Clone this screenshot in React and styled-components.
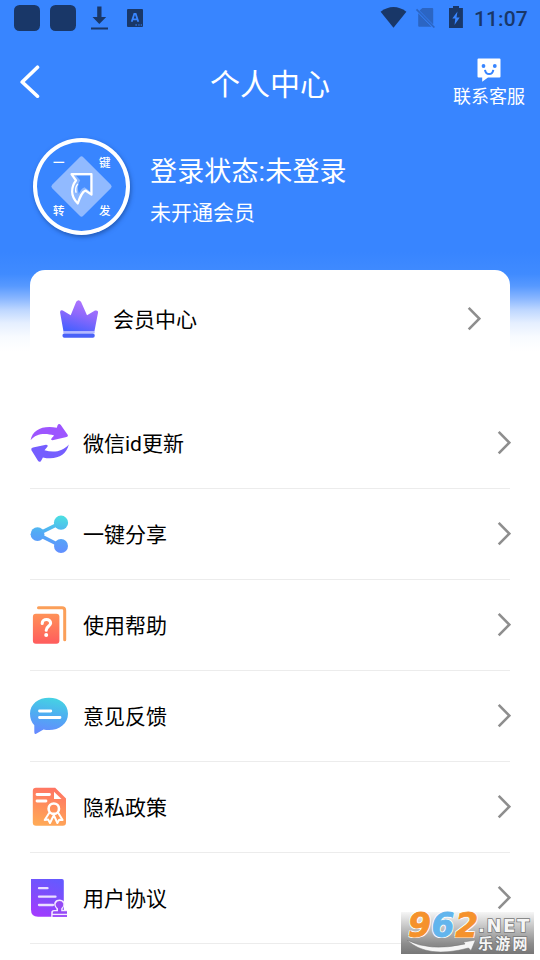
import React from "react";
import styled, { createGlobalStyle } from "styled-components";

const CrownIcon = () => (
  <svg width="40" height="40" viewBox="0 0 40 40">
    <defs>
      <linearGradient id="crown" x1="0.7" y1="0" x2="0.35" y2="1">
        <stop offset="0" stopColor="#b276ff" />
        <stop offset="0.45" stopColor="#9069fb" />
        <stop offset="1" stopColor="#4860ff" />
      </linearGradient>
    </defs>
    <g transform="translate(0 1)">
      <path
        d="M4.5 31.5 1.1 12.5Q1 9.5 3.8 10.6L11.7 15.2 17.2 1.8Q19.5-1.4 22 1.8L28 15.2 36 10.6Q39.5 9.7 39 12.8L35.4 31.5Z"
        fill="url(#crown)"
      />
      <path d="M4.3 31.5H35.7V33.4H4.3Z" fill="#b5b8ff" />
      <rect x="3.5" y="33.4" width="32.2" height="4.4" rx="1.8" fill="#4961f8" />
    </g>
  </svg>
);

const RefreshIcon = () => (
  <svg width="40" height="40" viewBox="0 0 40 40">
    <path
      d="M.6 17.3C2.5 7 12.5 2.2 26.8 4.8L27.6 2.2Q29 0 31 2.3L37.8 12Q38.5 13.7 36.5 14.1L22.5 17.2Q20.2 17 21.8 14.9L24.2 12.6C14.5 9.7 6 10.8 .6 17.3Z"
      fill="#9d55ff"
    />
    <path
      d="M38.8 21.5C36.5 32.4 26 37.4 12.9 34.4L11 37.9Q9.5 39.9 7.8 37.6L1.3 26.9Q.9 25 3 24.5L16 21.7Q18.7 21.8 17.2 24.1L14.5 27.2C24 30.3 33 28.3 38.8 21.5Z"
      fill="#755eff"
    />
  </svg>
);

const ShareIcon = () => (
  <svg width="40" height="40" viewBox="0 0 40 40">
    <defs>
      <linearGradient id="share" gradientUnits="userSpaceOnUse" x1="24" y1="2" x2="20" y2="38">
        <stop offset="0" stopColor="#4cdde2" />
        <stop offset="0.5" stopColor="#52aaf5" />
        <stop offset="1" stopColor="#628eff" />
      </linearGradient>
    </defs>
    <g fill="url(#share)">
      <circle cx="7.5" cy="20.2" r="6.9" />
      <circle cx="31" cy="8.7" r="7.1" />
      <circle cx="31" cy="32" r="7" />
    </g>
    <path d="M31 8.7 7.5 20.2 31 32" fill="none" stroke="url(#share)" strokeWidth="3.6" />
  </svg>
);

const HelpIcon = () => (
  <svg width="40" height="40" viewBox="0 0 40 40">
    <defs>
      <linearGradient id="help" x1="0" y1="0" x2="0" y2="1">
        <stop offset="0" stopColor="#ff9258" />
        <stop offset="1" stopColor="#ff5c5d" />
      </linearGradient>
    </defs>
    <path d="M8.5 2.7H32Q34.7 2.7 34.7 5.4V34.8" fill="none" stroke="#fb9f59" strokeWidth="3" strokeLinecap="round" />
    <rect x="2.9" y="8.7" width="26.5" height="30" rx="3" fill="url(#help)" />
    <path
      d="M12.2 18.5C12.3 13 20.8 13.4 20.6 18.2C20.5 21.3 16.2 21.4 16.2 25.2"
      fill="none"
      stroke="#fff"
      strokeWidth="3.1"
      strokeLinecap="round"
    />
    <circle cx="16.2" cy="30" r="2" fill="#fff" />
  </svg>
);

const FeedbackIcon = () => (
  <svg width="40" height="40" viewBox="0 0 40 40">
    <defs>
      <linearGradient id="feedback" x1="0.6" y1="0" x2="0.4" y2="1">
        <stop offset="0" stopColor="#45d3e3" />
        <stop offset="0.5" stopColor="#4fabf2" />
        <stop offset="1" stopColor="#668aff" />
      </linearGradient>
    </defs>
    <g transform="translate(0 -1)">
      <path
        d="M19 2.8C29.5 2.8 38 9 38 18.7C38 28.5 29.5 35 19 35Q16 35 13.5 34.4L6.2 38.7Q4.2 39.5 4.3 37V30.2Q0 26 0 18.8C0 9 8.5 2.8 19 2.8Z"
        fill="url(#feedback)"
      />
      <path d="M9.5 16H20.8M9.5 22.5H30" stroke="#fff" strokeWidth="2.8" strokeLinecap="round" />
    </g>
  </svg>
);

const PrivacyIcon = () => (
  <svg width="40" height="40" viewBox="0 0 40 40">
    <defs>
      <linearGradient id="privacy" x1="0.6" y1="0" x2="0.4" y2="1">
        <stop offset="0" stopColor="#ff7463" />
        <stop offset="1" stopColor="#ffa957" />
      </linearGradient>
    </defs>
    <path d="M6 .8H25.2L36 11.6V35.6Q36 38.8 32.8 38.8H6Q2.8 38.8 2.8 35.6V4Q2.8.8 6 .8Z" fill="url(#privacy)" />
    <path d="M24 4.7V12H31.5Z" fill="#fff" />
    <g fill="none" stroke="#fff" strokeLinecap="round" strokeLinejoin="round">
      <path d="M7 7.5H19.5M7 14H16" strokeWidth="2.8" />
      <circle cx="23.8" cy="21.7" r="5.2" strokeWidth="2.6" />
      <path
        d="M19.5 25.5 14.7 33 18.2 32.6 20 36 23.8 28.2 27.4 36 29.2 32.7 32.6 33 28 25.5"
        strokeWidth="2"
      />
    </g>
  </svg>
);

const AgreementIcon = () => (
  <svg width="40" height="40" viewBox="0 0 40 40">
    <defs>
      <linearGradient id="agreement" x1="0.65" y1="0" x2="0.3" y2="1">
        <stop offset="0" stopColor="#6659ff" />
        <stop offset="0.5" stopColor="#814cfb" />
        <stop offset="1" stopColor="#a23bff" />
      </linearGradient>
    </defs>
    <path d="M1 .9H32Q33.8.9 33.8 2.7V38.8H8Q1 38.8 1 31.8Z" fill="url(#agreement)" />
    <path d="M9 10.2H17.5M9 18.7H25.5M9 27H23" stroke="#eadfff" strokeWidth="2.3" strokeLinecap="round" />
    <path
      d="M21.2 39V34.5Q21.2 32 24 32H26.6Q26.5 30.3 25.3 29.2C22.6 24.6 25.4 21.4 29.5 21.4C33.8 21.4 36.2 25 33.5 29.2Q32.5 30.3 32.6 32H37V39Z"
      fill="#f4eaff"
    />
    <path
      d="M22.8 35.8V34.6Q22.8 33.2 24.4 33.2H28V30.5Q25 28 25.8 25.4Q27 23 29.6 23Q32.2 23 33.3 25.4Q34 28 31.2 30.5V33.2H37V35.8Z"
      fill="#9449f5"
    />
    <path d="M22.6 37H37V39H22.6Z" fill="#a052fa" />
  </svg>
);

const Chevron = () => (
  <svg width="14" height="24" viewBox="0 0 14 24">
    <path d="M1.7.9 12.3 11.6 1.7 22.3" fill="none" stroke="#8e8e8e" strokeWidth="2.6" />
  </svg>
);

const menu = [
  { label: "微信id更新", icon: <RefreshIcon /> },
  { label: "一键分享", icon: <ShareIcon /> },
  { label: "使用帮助", icon: <HelpIcon /> },
  { label: "意见反馈", icon: <FeedbackIcon /> },
  { label: "隐私政策", icon: <PrivacyIcon /> },
  { label: "用户协议", icon: <AgreementIcon /> },
];

const StatusIcons = () => (
  <svg width="146" height="36" viewBox="0 0 146 36">
    <g fill="#193768">
      <rect x="14" y="5" width="26" height="26" rx="5.5" />
      <rect x="50" y="5" width="26" height="26" rx="5.5" />
      <path d="M97.2 6.5H101.5V17H106.2L99.3 24 92.5 17H97.2ZM91 27.4H108V29.6H91Z" />
      <rect x="127" y="9" width="16" height="18" rx="1" />
    </g>
    <path d="M131.7 21.8 134.3 14H135.7L138.3 21.8M132.7 19.3H137.3" fill="none" stroke="#3885ff" strokeWidth="1.8" />
    <path d="M135.3 25H137M138.3 25H139.6M140.7 25H142" stroke="#3885ff" strokeWidth="1.2" />
  </svg>
);

const SignalIcons = () => (
  <svg width="84" height="36" viewBox="380 0 84 36">
    <path d="M380.6 11.7Q393.5 2.5 406.4 11.7L393.5 27.8Z" fill="#193768" />
    <path d="M422.5 8H432.2Q433.2 8 433.2 9V24.5L419.5 10.6ZM418.2 13.2 431.5 26.8H419.2Q418.2 26.8 418.2 25.8Z" fill="#2b65c3" />
    <path d="M416.5 9.3 434.4 27.5" stroke="#2b65c3" strokeWidth="1.7" />
    <path d="M453 6H459V8H462.9V28H449V8H453Z" fill="#193768" />
    <path d="M457.5 11.5 452.3 18.5H455.3L454.5 25 459.7 17.6H456.5Z" fill="#3885ff" />
  </svg>
);

const AvatarArt = () => (
  <svg width="97" height="97" viewBox="0 0 97 97">
    <rect x="26.5" y="26.5" width="44" height="44" rx="2.5" fill="#91baff" transform="rotate(45 48.5 48.5)" />
    <path
      d="M38.5 36.2H58.5V56.7L52.5 52.5C48.8 54 47 59 44.8 65.5C37 58 38 49 43 42.5Z"
      fill="#8db8ff"
      stroke="#fff"
      strokeWidth="2.2"
      strokeLinejoin="round"
    />
    <path d="M43 37.8H57V53.2L51.5 49.2Q47.7 51 45.8 56Q43.5 48 47.2 42.2Z" fill="#4a90ff" />
    <path d="M44.8 45.8Q41.5 50 43.2 54.8" fill="none" stroke="#fff" strokeWidth="1.3" />
  </svg>
);

const ServiceIcon = () => (
  <svg width="24" height="25" viewBox="0 0 24 25">
    <path d="M1.5.5H22.5Q23.5.5 23.5 1.5V18.5Q23.5 19.5 22.5 19.5H11L5.2 23.8V19.5H1.5Q.5 19.5.5 18.5V1.5Q.5.5 1.5.5Z" fill="#fff" />
    <g fill="#3885ff">
      <circle cx="6.5" cy="8" r="1.9" />
      <circle cx="17.8" cy="8" r="1.9" />
    </g>
    <path d="M8 11.8C8.8 17.4 15.5 17.4 16.3 11.8" fill="none" stroke="#3885ff" strokeWidth="2" />
  </svg>
);

const App = () => {
  return (
    <Page>
      <GlobalStyle />
      <Hero>
        <StatusBar>
          <StatusIcons />
          <StatusRight>
            <SignalIcons />
            <Clock>11:07</Clock>
          </StatusRight>
        </StatusBar>
        <TitleBar>
          <BackButton aria-label="返回">
            <svg width="22" height="34" viewBox="0 0 22 34">
              <path d="M18.5 2.2 3.2 17 18.5 31.2" fill="none" stroke="#fff" strokeWidth="3.6" strokeLinecap="round" strokeLinejoin="round" />
            </svg>
          </BackButton>
          <Title>个人中心</Title>
          <Service>
            <ServiceIcon />
            <span>联系客服</span>
          </Service>
        </TitleBar>
        <Profile>
          <Avatar>
            <AvatarArt />
            <AvatarText>
              <span>一</span>
              <span>键</span>
              <span>转</span>
              <span>发</span>
            </AvatarText>
          </Avatar>
          <div>
            <LoginState>登录状态:未登录</LoginState>
            <MemberState>未开通会员</MemberState>
          </div>
        </Profile>
        <MemberCard>
          <CrownIcon />
          <Label>会员中心</Label>
          <Chevron />
        </MemberCard>
      </Hero>
      <Menu>
        {menu.map((item) => (
          <MenuItem key={item.label}>
            {item.icon}
            <Label>{item.label}</Label>
            <Chevron />
          </MenuItem>
        ))}
      </Menu>
      <Watermark>
        <Swoosh viewBox="0 0 70 14">
          <path d="M0 0Q22 12 58 4L56.5 2 68.5 0 64 10.5 61.5 8Q20 19 0 0Z" fill="#f5f5f5" stroke="#777" strokeWidth=".5" />
        </Swoosh>
        <Digits>
          9<Digit $color="#62b5ed">6</Digit>2
        </Digits>
        <Net>.NET</Net>
        <SiteName>乐游网</SiteName>
      </Watermark>
    </Page>
  );
};

export default App;

// Styled Components
const GlobalStyle = createGlobalStyle`
  * {
    box-sizing: border-box;
  }

  body {
    margin: 0;
    background: #fff;
    font-family: Roboto, "Noto Sans CJK SC", sans-serif;
  }

  svg {
    display: block;
    flex-shrink: 0;
  }
`;

const Page = styled.div`
  position: relative;
  width: 540px;
  height: 960px;
  overflow: hidden;
  background: #fff;
`;

const Hero = styled.header`
  height: 398px;
  background: linear-gradient(
    #3885ff 0,
    #3885ff 252px,
    #408bff 274px,
    #5799ff 286px,
    #87b5ff 298px,
    #bed7ff 310px,
    #e5efff 323px,
    #f8fbff 337px,
    #fff 352px
  );
`;

const StatusBar = styled.div`
  display: flex;
  justify-content: space-between;
  height: 36px;
`;

const StatusRight = styled.div`
  display: flex;
  align-items: center;
  gap: 10px;
  width: 160px;
`;

const Clock = styled.span`
  color: #193768;
  font-size: 21px;
  font-weight: 500;
  letter-spacing: 0.1px;
  line-height: 36px;
  padding-top: 2px;
`;

const TitleBar = styled.div`
  display: grid;
  grid-template-columns: 100px 1fr 100px;
  align-items: center;
  height: 92px;
  color: #fff;
`;

const BackButton = styled.button`
  padding: 0 0 0 19px;
  border: 0;
  background: none;
`;

const Title = styled.h1`
  margin: 0;
  padding-top: 5px;
  font-size: 30px;
  font-weight: 400;
  line-height: 44px;
  text-align: center;
`;

const Service = styled.div`
  display: flex;
  flex-direction: column;
  align-items: center;
  gap: 1px;
  padding: 3px 2px 0 0;
  font-size: 18px;
  line-height: 26px;
`;

const Profile = styled.section`
  display: flex;
  gap: 20px;
  height: 142px;
  padding: 10px 33px 0;
  color: #fff;
`;

const Avatar = styled.div`
  position: relative;
  width: 97px;
  height: 97px;
  border-radius: 50%;
  box-shadow: inset 0 0 0 4px #fff, 1px 2px 4px rgba(20, 60, 130, 0.6);
`;

const AvatarText = styled.div`
  position: absolute;
  inset: 17px 19px 16px 20px;
  display: grid;
  grid-template-columns: 12px 12px;
  justify-content: space-between;
  align-content: space-between;
  font-size: 11.5px;
  font-weight: 500;
  line-height: 16px;
`;

const LoginState = styled.div`
  padding-top: 14px;
  font-size: 27px;
  letter-spacing: 0.15px;
  line-height: 40px;
`;

const MemberState = styled.div`
  padding-top: 6px;
  font-size: 21px;
  line-height: 30px;
`;

const MemberCard = styled.div`
  display: flex;
  align-items: center;
  height: 98px;
  margin: 0 30px;
  padding: 0 29px;
  border-radius: 15px 15px 0 0;
  background: #fff;
`;

const Label = styled.span`
  flex: 1;
  padding: 2px 0 0 14px;
  color: #000;
  font-size: 21px;
  line-height: 30px;
`;

const Menu = styled.div`
  padding: 0 30px;
`;

const MenuItem = styled.div`
  display: flex;
  align-items: center;
  height: 91px;
  margin-right: -1px;
  padding-bottom: 1px;
  background: linear-gradient(#ececec, #ececec) left bottom / 480px 1px no-repeat;

  ${Label} {
    padding-left: 13px;
  }
`;

const Watermark = styled.div`
  position: absolute;
  left: 401px;
  top: 912px;
  width: 133px;
  height: 42px;
  background: linear-gradient(rgba(245, 245, 245, 0.9), #8d8d8d 75%, #777);
`;

const Digits = styled.div`
  position: absolute;
  left: 7px;
  top: -4px;
  color: #f5922c;
  font: italic 700 33px/36px "DejaVu Sans", sans-serif;
  letter-spacing: 0.6px;
  -webkit-text-stroke: 0.8px currentColor;
  text-shadow: 1px 1px 0 #fff, -1px -1px 0 #fff, 1px -1px 0 #fff, -1px 1px 0 #fff;
`;

const Digit = styled.span`
  color: ${(props) => props.$color};
`;

const Swoosh = styled.svg`
  position: absolute;
  left: 6px;
  top: 28px;
  width: 70px;
  height: 14px;
`;

const Net = styled.div`
  position: absolute;
  left: 77px;
  top: 4px;
  color: #f5f5f5;
  font: 700 18px/20px "DejaVu Sans", sans-serif;
  letter-spacing: 1.6px;
  -webkit-text-stroke: 1.5px #777;
  paint-order: stroke fill;
`;

const SiteName = styled.div`
  position: absolute;
  left: 77px;
  top: 23px;
  color: #f5f5f5;
  font-size: 15px;
  font-weight: 700;
  letter-spacing: 2.3px;
  line-height: 18px;
  -webkit-text-stroke: 1.5px #777;
  paint-order: stroke fill;
`;
